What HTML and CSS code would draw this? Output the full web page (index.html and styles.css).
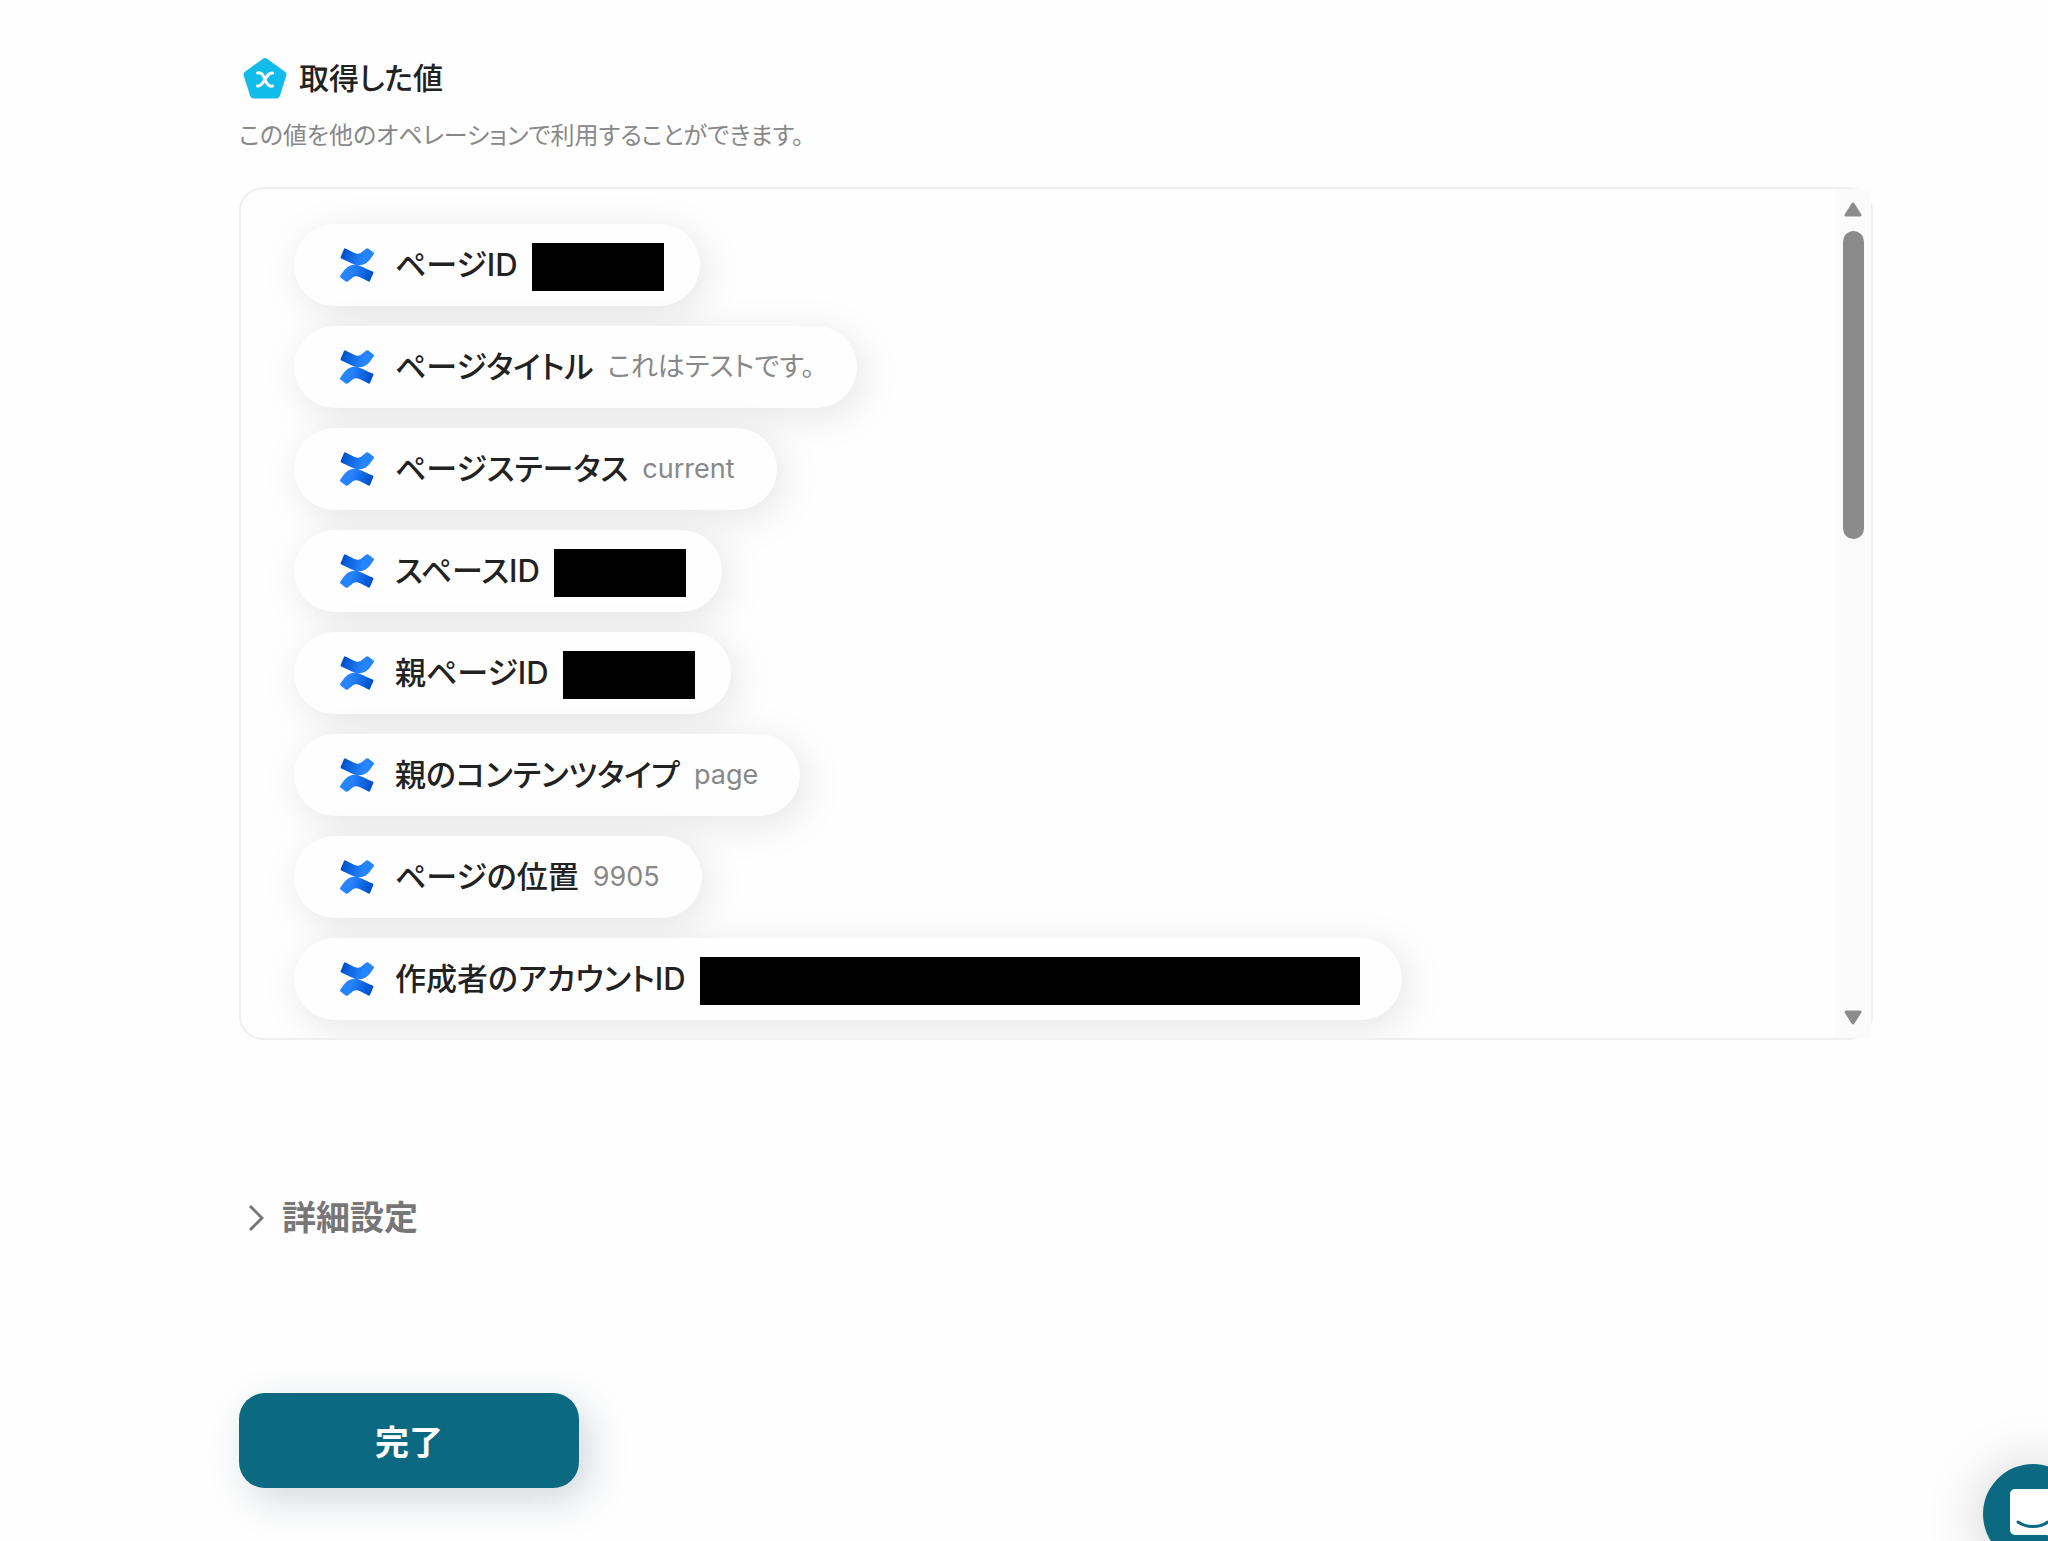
FILE: index.html
```
<!DOCTYPE html>
<html lang="ja">
<head>
    <meta charset="UTF-8">
    <meta name="viewport" content="width=device-width, initial-scale=1.0">
    <title>取得した値</title>
    <link rel="stylesheet" href="styles.css">
</head>
<body>

    <!-- shared icon -->
    <svg class="defs" width="0" height="0" aria-hidden="true">
        <defs>
            <linearGradient id="blade" gradientUnits="userSpaceOnUse" x1="2" y1="4" x2="26" y2="12">
                <stop offset="0.1" stop-color="#0052cc"/>
                <stop offset="0.9" stop-color="#2684ff"/>
            </linearGradient>
            <path id="half" fill="url(#blade)" d="M6.500 0.400 L15 4.700 C18.500 6.400 21 6 23.500 3.500 L27.300 0.500 Q28.300 -0.200 29.300 0.600 L34.500 4.500 Q35.400 5.300 34.700 6.300 C31 12 27.500 17 20.500 17.300 C16 17.500 11.500 14.500 2.300 10.400 Q1.300 9.900 1.700 8.800 L5 1.100 Q5.500 0 6.500 0.400 Z"/>
            <symbol id="confluence" viewBox="0 0 36 34">
                <use href="#half"/>
                <use href="#half" transform="rotate(180 18 17)"/>
            </symbol>
        </defs>
    </svg>

    <main class="container">
        <div class="heading">
            <svg class="heading-icon" viewBox="0 0 44 42" aria-hidden="true">
                <path d="M22 4.500 L40 17.500 L33.500 38 H10.500 L4 17.500 Z" fill="#11bbea" stroke="#11bbea" stroke-width="7" stroke-linejoin="round"/>
                <path d="M14.500 16c4-1 5.500 1.500 7.500 6.500s4 7.500 7.500 6.500M29.500 16c-3.500-.500-5.500 3-7.500 6.500s-4.500 7-7.500 6.500" fill="none" stroke="#fff" stroke-width="3" stroke-linecap="round"/>
            </svg>
            <h2>取得した値</h2>
        </div>
        <p class="description">この値を他のオペレーションで利用することができます。</p>

        <section class="panel">
            <ul class="values">
                <li class="chip chip-redacted"><svg class="chip-icon"><use href="#confluence"/></svg><span class="label">ページID</span><span class="redacted"></span></li>
                <li class="chip"><svg class="chip-icon"><use href="#confluence"/></svg><span class="label">ページタイトル</span><span class="value">これはテストです。</span></li>
                <li class="chip"><svg class="chip-icon"><use href="#confluence"/></svg><span class="label">ページステータス</span><span class="value">current</span></li>
                <li class="chip chip-redacted"><svg class="chip-icon"><use href="#confluence"/></svg><span class="label">スペースID</span><span class="redacted"></span></li>
                <li class="chip chip-redacted"><svg class="chip-icon"><use href="#confluence"/></svg><span class="label">親ページID</span><span class="redacted"></span></li>
                <li class="chip"><svg class="chip-icon"><use href="#confluence"/></svg><span class="label">親のコンテンツタイプ</span><span class="value">page</span></li>
                <li class="chip"><svg class="chip-icon"><use href="#confluence"/></svg><span class="label">ページの位置</span><span class="value">9905</span></li>
                <li class="chip"><svg class="chip-icon"><use href="#confluence"/></svg><span class="label">作成者のアカウントID</span><span class="redacted redacted-long"></span></li>
            </ul>
            <div class="scrollbar" aria-hidden="true">
                <svg class="arrow" viewBox="0 0 18 15"><path d="M9 2 L16 13 H2 Z"/></svg>
                <div class="thumb"></div>
                <svg class="arrow arrow-down" viewBox="0 0 18 15"><path d="M9 13 L16 2 H2 Z"/></svg>
            </div>
        </section>

        <button class="details" type="button">
            <svg class="chevron" viewBox="0 0 16 28" aria-hidden="true"><path d="M2 2 L14 14 L2 26"/></svg>
            詳細設定
        </button>

        <button class="done" type="button">完了</button>
    </main>

    <button class="chat" type="button" aria-label="チャット">
        <svg viewBox="0 0 46 52" aria-hidden="true">
            <path d="M5 0h36a5 5 0 0 1 5 5v47l-9-6H5a5 5 0 0 1-5-5V5a5 5 0 0 1 5-5z" fill="#fff"/>
            <path d="M8 33c8 6 22 6 30 0" fill="none" stroke="#0b6981" stroke-width="3" stroke-linecap="round"/>
        </svg>
    </button>

</body>
</html>
```
FILE: styles.css
```
* {
    box-sizing: border-box;
}
body {
    font-family: Inter, "Noto Sans CJK JP", sans-serif;
    font-feature-settings: "palt";
    background-color: #fefefe;
    color: #222;
    margin: 0;
}
button {
    font: inherit;
    font-feature-settings: inherit;
    border: none;
    cursor: pointer;
}
.defs {
    position: absolute;
}
.container {
    display: flex;
    flex-direction: column;
    align-items: flex-start;
    padding: 56px 175px 52px 239px;
}
.heading {
    display: flex;
    align-items: center;
    gap: 12px;
    padding-left: 4px;
}
.heading-icon {
    width: 44px;
    height: 44px;
}
h2 {
    margin: 0;
    font-size: 30px;
    line-height: 44px;
    font-weight: 500;
}
.description {
    margin: 20px 0 35px;
    font-size: 24px;
    line-height: 32px;
    color: #888;
}
.panel {
    display: flex;
    width: 100%;
    border: 2px solid #efefef;
    border-radius: 24px;
}
.values {
    flex: 1;
    display: flex;
    flex-direction: column;
    align-items: flex-start;
    gap: 20px;
    margin: 0;
    padding: 35px 53px 18px;
    list-style: none;
    overflow: hidden;
    border-radius: 22px 0 0 22px;
}
.chip {
    display: flex;
    align-items: center;
    gap: 14px;
    height: 82px;
    padding: 0 42px 0 45px;
    border-radius: 41px;
    background-color: #fefefe;
    box-shadow: 6px 8px 40px rgba(0, 0, 0, 0.1);
}
.chip-redacted {
    padding-right: 36px;
}
.chip-icon {
    width: 36px;
    height: 34px;
    margin-right: 6px;
}
.label {
    font-size: 31px;
    line-height: 44px;
    font-weight: 500;
}
.value {
    font-size: 27px;
    line-height: 44px;
    color: #888;
}
.redacted {
    width: 132px;
    height: 48px;
    margin-top: 4px;
    background-color: #000;
}
.redacted-long {
    width: 660px;
}
.scrollbar {
    display: flex;
    flex-direction: column;
    align-items: center;
    width: 36px;
    padding: 13px 0;
    background-color: #fbfbfb;
}
.arrow {
    width: 18px;
    height: 15px;
    fill: #8b8b8b;
    stroke: #8b8b8b;
    stroke-width: 3px;
    stroke-linejoin: round;
}
.arrow-down {
    margin-top: auto;
}
.thumb {
    width: 21px;
    height: 308px;
    margin-top: 14px;
    border-radius: 11px;
    background-color: #8b8b8b;
}
.details {
    display: flex;
    align-items: center;
    gap: 18px;
    margin: 153px 0 150px;
    padding: 0 0 0 9px;
    background: none;
    color: #777;
    font-size: 34px;
    line-height: 50px;
    font-weight: 700;
}
.chevron {
    width: 16px;
    height: 28px;
    fill: none;
    stroke: #777;
    stroke-width: 3px;
}
.done {
    width: 340px;
    height: 95px;
    border-radius: 26px;
    background-color: #0b6981;
    color: #fff;
    font-size: 34px;
    font-weight: 700;
    box-shadow: 10px 12px 40px rgba(30, 60, 80, 0.2);
}
.chat {
    position: fixed;
    right: -35px;
    bottom: -23px;
    display: flex;
    justify-content: center;
    width: 100px;
    height: 100px;
    padding: 25px 0 0;
    border-radius: 50%;
    background-color: #0b6981;
    box-shadow: 0 4px 60px rgba(0, 0, 0, 0.2);
}
.chat svg {
    width: 46px;
    height: 52px;
}
```
